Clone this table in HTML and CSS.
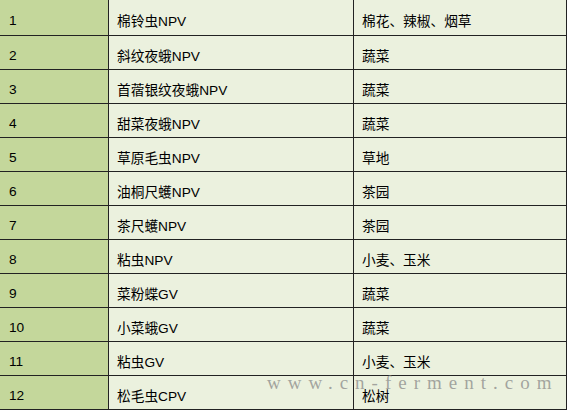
FILE: index.html
```
<!DOCTYPE html>
<html>
<head>
<meta charset="utf-8">
<link rel="stylesheet" href="styles.css">
</head>
<body>
<div class="page">
  <div class="grid">
    <div class="c num">1</div><div class="c">棉铃虫NPV</div><div class="c">棉花、辣椒、烟草</div>
    <div class="c num">2</div><div class="c">斜纹夜蛾NPV</div><div class="c">蔬菜</div>
    <div class="c num">3</div><div class="c">首蓿银纹夜蛾NPV</div><div class="c">蔬菜</div>
    <div class="c num">4</div><div class="c">甜菜夜蛾NPV</div><div class="c">蔬菜</div>
    <div class="c num">5</div><div class="c">草原毛虫NPV</div><div class="c">草地</div>
    <div class="c num">6</div><div class="c">油桐尺蠖NPV</div><div class="c">茶园</div>
    <div class="c num">7</div><div class="c">茶尺蠖NPV</div><div class="c">茶园</div>
    <div class="c num">8</div><div class="c">粘虫NPV</div><div class="c">小麦、玉米</div>
    <div class="c num">9</div><div class="c">菜粉蝶GV</div><div class="c">蔬菜</div>
    <div class="c num">10</div><div class="c">小菜蛾GV</div><div class="c">蔬菜</div>
    <div class="c num">11</div><div class="c">粘虫GV</div><div class="c">小麦、玉米</div>
    <div class="c num">12</div><div class="c">松毛虫CPV</div><div class="c">松树</div>
  </div>
  <div class="watermark">www.cn-ferment.com</div>
</div>
</body>
</html>
```

FILE: styles.css
```
html, body {
  margin: 0;
  padding: 0;
  background: #ffffff;
}
.page {
  position: relative;
  width: 568px;
  height: 411px;
  overflow: hidden;
}
.grid {
  display: grid;
  grid-template-columns: 109px 245px 213px;
  grid-template-rows: 36px repeat(11, 34px);
  margin: -1px 0 0 -1px;
  border-top: 1px solid #222;
  border-left: 1px solid #222;
  width: max-content;
  font-family: "Liberation Sans", "Noto Sans CJK SC", sans-serif;
  font-size: 13.7px;
  color: #000;
}
.c {
  box-sizing: border-box;
  border-right: 1px solid #222;
  border-bottom: 1px solid #222;
  background: #ebf1de;
  display: flex;
  align-items: center;
  padding: 5px 0 0 8px;
}
.num {
  background: #c4d79b;
  padding-left: 9px;
}
.watermark {
  position: absolute;
  left: 267px;
  top: 372px;
  font-family: "Liberation Serif", serif;
  font-size: 19px;
  letter-spacing: 7px;
  color: rgba(130, 130, 130, 0.7);
  white-space: nowrap;
}
```
